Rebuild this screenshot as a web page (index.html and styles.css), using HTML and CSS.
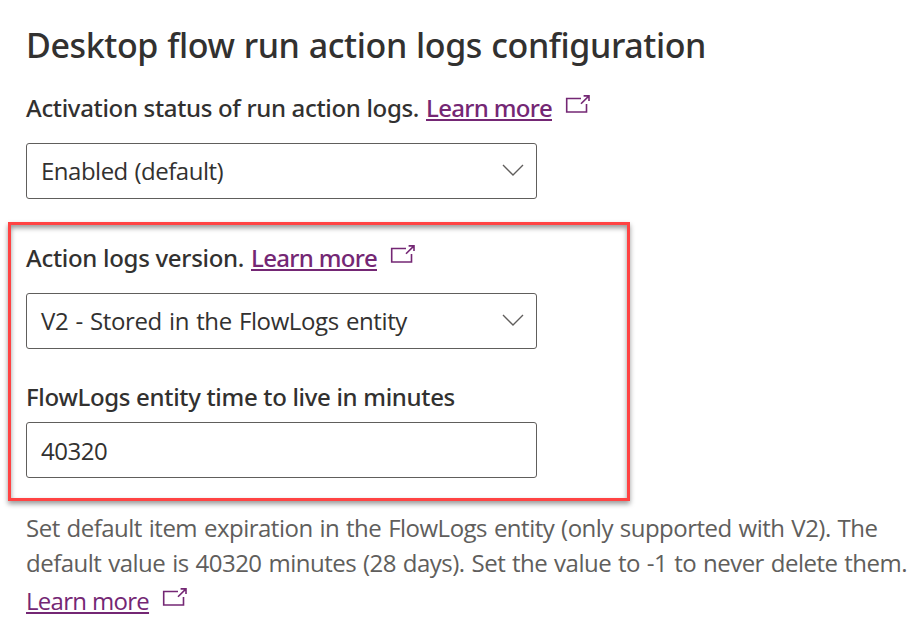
FILE: index.html
```html
<!DOCTYPE html>
<html lang="en">
<head>
<meta charset="utf-8">
<title>Desktop flow run action logs configuration</title>
<link rel="stylesheet" href="styles.css">
</head>
<body>
<svg class="symbols" aria-hidden="true">
  <symbol id="external" viewBox="0 0 26 20">
    <path d="M16 4.5H1.7V18H21.5V10"/>
    <path d="M16 9.8L24 1.9M18.6 1.9H24V7"/>
  </symbol>
  <symbol id="chevron" viewBox="0 0 22 12">
    <path d="M1 1L11 11L21 1"/>
  </symbol>
</svg>
<main class="page">
  <h1 class="title">Desktop flow run action logs configuration</h1>
  <div class="label"><span class="status">Activation status of run action logs.</span><a class="link strong" href="#">Learn more</a><svg class="external"><use href="#external"/></svg></div>
  <div class="field"><span class="enabled">Enabled (default)</span><svg class="chevron"><use href="#chevron"/></svg></div>
  <section class="highlight">
    <div class="label"><span class="version">Action logs version.</span><a class="link strong" href="#">Learn more</a><svg class="external"><use href="#external"/></svg></div>
    <div class="field"><span class="entity">V2 - Stored in the FlowLogs entity</span><svg class="chevron"><use href="#chevron"/></svg></div>
    <div class="label ttl">FlowLogs entity time to live in minutes</div>
    <div class="field input"><span class="minutes">40320</span></div>
  </section>
  <p class="help">Set default item expiration in the FlowLogs entity (only supported with V2). The<br>default value is 40320 minutes (28 days). Set the value to -1 to never delete them.</p>
  <div class="label more"><a class="link" href="#">Learn more</a><svg class="external"><use href="#external"/></svg></div>
</main>
</body>
</html>
```

FILE: styles.css
```css
* { box-sizing: border-box; }
body {
  margin: 0;
  background: #fff;
  color: #323130;
  font: 400 24px/36px "Open Sans", "Noto Sans", sans-serif;
  white-space: nowrap;
}
.symbols { display: none; }
.page { padding: 22px 0 0 26px; }
.title {
  margin: 0 0 22px;
  font: 500 34px/46px "Noto Sans", sans-serif;
  letter-spacing: -0.4px;
  word-spacing: 0.8px;
}
.label {
  display: flex;
  height: 36px;
  margin-bottom: 17px;
  font-family: "Noto Sans", sans-serif;
  font-weight: 500;
}
.status { width: 400px; letter-spacing: -0.33px; }
.version { width: 225px; letter-spacing: -0.3px; }
.ttl { margin: 30px 0 7px; letter-spacing: -0.32px; }
.link {
  width: 123px;
  color: #742774;
  letter-spacing: -0.7px;
  text-decoration: underline;
  text-decoration-thickness: 2px;
  text-underline-offset: 2px;
  text-decoration-skip-ink: none;
}
.link.strong { width: 126px; letter-spacing: -0.66px; }
.external {
  width: 26px;
  height: 20px;
  margin: 4px 0 0 13px;
  fill: none;
  stroke: #742774;
  stroke-width: 1.6;
}
.field {
  display: flex;
  align-items: center;
  justify-content: space-between;
  width: 511px;
  height: 56px;
  padding: 0 12px 0 14px;
  border: 1px solid #605e5c;
  border-radius: 3px;
}
.chevron {
  width: 22px;
  height: 12px;
  margin-bottom: 2px;
  fill: none;
  stroke: #605e5c;
  stroke-width: 1.4;
}
.enabled { letter-spacing: -0.5px; word-spacing: 1px; }
.entity { letter-spacing: -0.4px; word-spacing: 1.4px; }
.input { padding-top: 2px; }
.minutes { letter-spacing: -0.5px; }
.highlight {
  width: 622px;
  height: 279px;
  margin: 23px 0 9px -18px;
  padding: 15px 0 0 15px;
  border: 3px solid #ff4343;
  box-shadow: 0 3px 5px rgba(0, 0, 0, 0.4), inset 0 3px 5px rgba(0, 0, 0, 0.4);
}
.help {
  margin: 0 0 3px;
  color: #605e5c;
  line-height: 35px;
  letter-spacing: -0.5px;
  word-spacing: 1.1px;
}
.more { font-family: "Open Sans", sans-serif; font-weight: 400; }
```
